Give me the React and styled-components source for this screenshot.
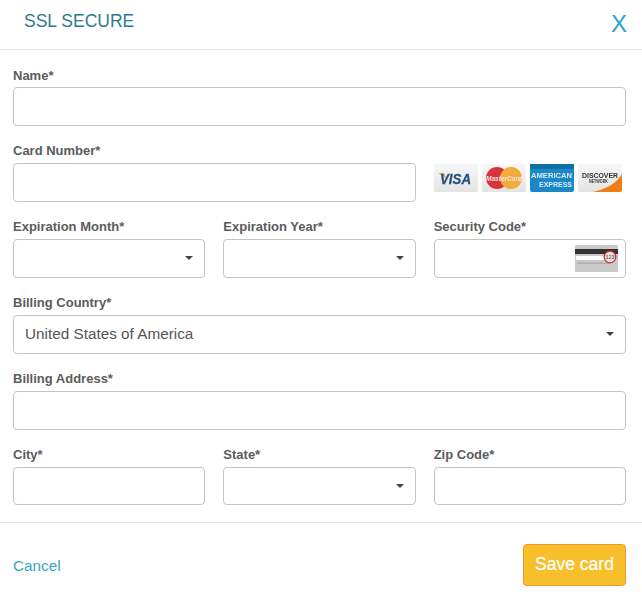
import React from 'react';
import styled, { createGlobalStyle } from 'styled-components';

const Global = createGlobalStyle`
  html, body { margin: 0; padding: 0; background: #fff; }
  body { font-family: "Liberation Sans", Arial, sans-serif; }
  * { box-sizing: border-box; }
`;

const Modal = styled.div`
  width: 642px;
  height: 606px;
  background: #fff;
`;

const Header = styled.div`
  height: 50px;
  border-bottom: 1px solid #e5e5e5;
  display: flex;
  justify-content: space-between;
  padding: 11px 15px 0 24px;
`;

const Title = styled.div`
  font-size: 17.5px;
  line-height: 20px;
  color: #2a7a8f;
`;

const Close = styled.div`
  font-size: 24px;
  line-height: 26px;
  color: #2ba3c4;
`;

const Form = styled.div`
  padding: 17px 16px 0 13px;
  display: grid;
  row-gap: 17px;
`;

const Row = styled.div`
  display: grid;
  grid-template-columns: ${p => p.$columns || '1fr'};
  column-gap: 18px;
`;

const Field = styled.div`
  display: flex;
  flex-direction: column;
  min-width: 0;
`;

const Label = styled.label`
  font-size: 13px;
  line-height: 15px;
  font-weight: 700;
  color: #5c5c5c;
  margin-top: ${p => (p.$first ? 1 : 0)}px;
  margin-bottom: ${p => (p.$first ? 4 : 5)}px;
`;

const Box = styled.div`
  position: relative;
  height: ${p => p.$height || 39}px;
  border: 1px solid #c4c4c4;
  border-radius: 4px;
  background: #fff;
  display: flex;
  align-items: center;
  padding: 0 11px 2px;
  font-size: 15.3px;
  color: #555;
`;

const Caret = styled.span`
  position: absolute;
  right: 11px;
  top: 16px;
  width: 0;
  height: 0;
  border-left: 4px solid transparent;
  border-right: 4px solid transparent;
  border-top: 4px solid #444;
`;

const Cards = styled.div`
  display: flex;
  gap: 4px;
  align-items: flex-start;
  padding-top: 21px;

  svg {
    filter: blur(0.3px);
  }
`;

const Cvv = styled.svg`
  position: absolute;
  right: 7px;
  top: 5px;
  filter: blur(0.3px);
`;

const Footer = styled.div`
  margin-top: 17px;
  border-top: 1px solid #e5e5e5;
  padding: 21px 16px 0 13px;
  display: flex;
  justify-content: space-between;
  align-items: center;
`;

const Cancel = styled.a`
  font-size: 15.3px;
  margin-top: 2px;
  color: #35a7c4;
`;

const SaveButton = styled.button`
  width: 103px;
  height: 42px;
  background: #f7bf2c;
  border: 1px solid #f0962a;
  border-radius: 4px;
  color: #fff;
  font-family: inherit;
  font-size: 17.5px;
  padding: 0 0 2px;
  -webkit-text-stroke: 0.2px #fff;
`;

const Select = ({ children, height }) => (
  <Box $height={height}>
    {children}
    <Caret />
  </Box>
);

const CardFrame = ({ children, fill = 'url(#cardGrey)' }) => (
  <svg width="44" height="28" viewBox="0 0 44 28">
    <rect x="0" y="0" width="44" height="28" rx="2" fill={fill} />
    {children}
  </svg>
);

const Visa = () => (
  <CardFrame>
    <path d="M4 9 h6 l2 5 z" fill="#e9a63a" />
    <text x="6" y="20" fontSize="15" fontWeight="700" fontStyle="italic" fill="#24507f" stroke="#24507f" strokeWidth="0.3" fontFamily="Liberation Sans" textLength="31" lengthAdjust="spacingAndGlyphs">VISA</text>
  </CardFrame>
);

const MasterCard = () => (
  <CardFrame>
    <circle cx="15" cy="14" r="11" fill="#d8323f" />
    <circle cx="29" cy="14" r="11" fill="#f0ac3c" />
    <text x="4" y="16.5" fontSize="6.8" fontWeight="700" fontStyle="italic" fill="#fbeadf" fontFamily="Liberation Sans" textLength="36" lengthAdjust="spacingAndGlyphs">MasterCard</text>
  </CardFrame>
);

const Amex = () => (
  <CardFrame fill="#1b87c4">
    <rect x="0" y="0" width="44" height="5" rx="1" fill="#0f6fa8" />
    <text x="1" y="13.5" fontSize="7.6" fontWeight="700" fill="#d8edf7" fontFamily="Liberation Sans" textLength="41" lengthAdjust="spacingAndGlyphs">AMERICAN</text>
    <text x="9" y="22.5" fontSize="7.6" fontWeight="700" fill="#d8edf7" fontFamily="Liberation Sans" textLength="33" lengthAdjust="spacingAndGlyphs">EXPRESS</text>
  </CardFrame>
);

const Discover = () => (
  <CardFrame>
    <path d="M15 28 C28 25 38 20 44 10 V26 a2 2 0 0 1 -2 2 z" fill="#f27c14" />
    <text x="4" y="14" fontSize="7.2" fontWeight="700" fill="#333" fontFamily="Liberation Sans" textLength="36" lengthAdjust="spacingAndGlyphs">DISCOVER</text>
    <text x="11" y="19" fontSize="4.5" fontWeight="700" fill="#333" fontFamily="Liberation Sans" textLength="19" lengthAdjust="spacingAndGlyphs">NETWORK</text>
  </CardFrame>
);

export default function App() {
  return (
    <Modal>
      <Global />
      <svg width="0" height="0" style={{ position: 'absolute' }}>
        <defs>
          <linearGradient id="cardGrey" x1="0" y1="0" x2="0" y2="1">
            <stop offset="0" stopColor="#f7f7f7" />
            <stop offset="1" stopColor="#e3e3e3" />
          </linearGradient>
        </defs>
      </svg>
      <Header>
        <Title>SSL SECURE</Title>
        <Close>X</Close>
      </Header>
      <Form>
        <Row>
          <Field>
            <Label $first>Name*</Label>
            <Box />
          </Field>
        </Row>
        <Row $columns="403px 1fr">
          <Field>
            <Label>Card Number*</Label>
            <Box />
          </Field>
          <Cards>
            <Visa />
            <MasterCard />
            <Amex />
            <Discover />
          </Cards>
        </Row>
        <Row $columns="1fr 1fr 1fr">
          <Field>
            <Label>Expiration Month*</Label>
            <Select />
          </Field>
          <Field>
            <Label>Expiration Year*</Label>
            <Select />
          </Field>
          <Field>
            <Label>Security Code*</Label>
            <Box>
              <Cvv width="43" height="27" viewBox="0 0 43 27">
                <rect width="43" height="27" rx="1" fill="#c9c9c9" />
                <rect y="4" width="43" height="5" fill="#333" />
                <rect x="1" y="11" width="29" height="4" fill="#fff" />
                <rect x="2" y="17.5" width="32" height="1.5" fill="#b0b0b0" />
                <circle cx="35" cy="12" r="5.8" fill="#e4e4e4" stroke="#d92a2a" strokeWidth="1.3" />
                <text x="35" y="14" textAnchor="middle" fontSize="5.5" fill="#444" fontFamily="Liberation Sans">123</text>
              </Cvv>
            </Box>
          </Field>
        </Row>
        <Row>
          <Field>
            <Label>Billing Country*</Label>
            <Select>United States of America</Select>
          </Field>
        </Row>
        <Row>
          <Field>
            <Label>Billing Address*</Label>
            <Box />
          </Field>
        </Row>
        <Row $columns="1fr 1fr 1fr">
          <Field>
            <Label>City*</Label>
            <Box $height={38} />
          </Field>
          <Field>
            <Label>State*</Label>
            <Select height={38} />
          </Field>
          <Field>
            <Label>Zip Code*</Label>
            <Box $height={38} />
          </Field>
        </Row>
      </Form>
      <Footer>
        <Cancel>Cancel</Cancel>
        <SaveButton>Save card</SaveButton>
      </Footer>
    </Modal>
  );
}
